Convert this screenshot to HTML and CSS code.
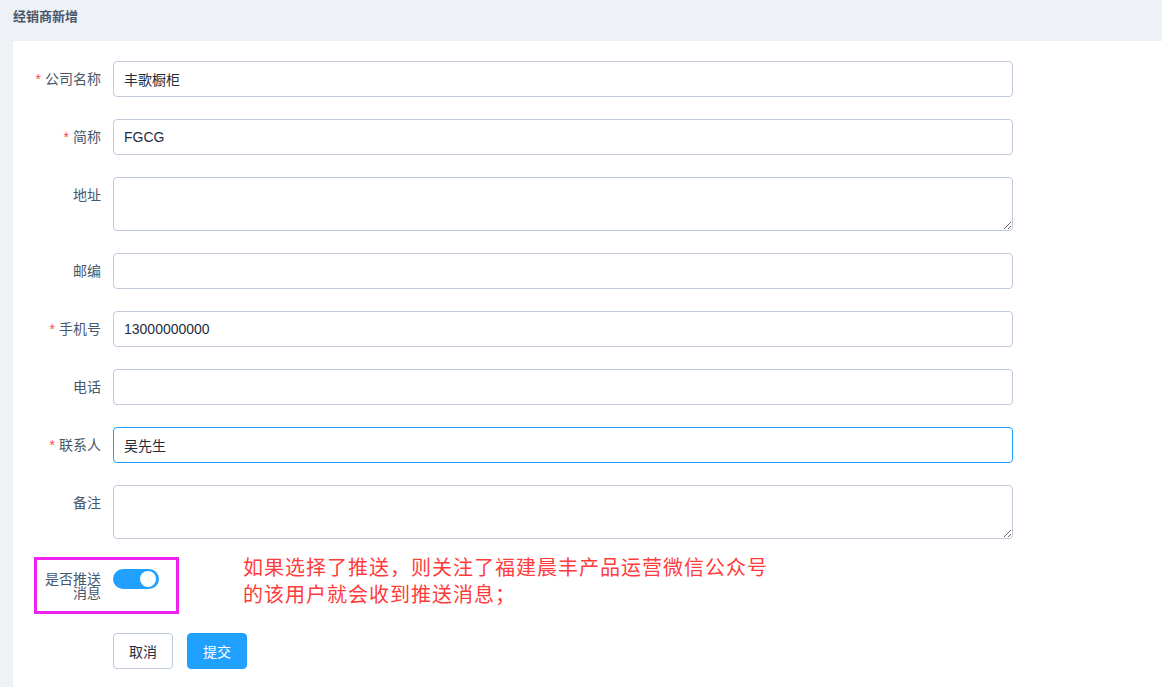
FILE: index.html
```html
<!DOCTYPE html>
<html lang="zh-CN">
<head>
<meta charset="utf-8">
<title>经销商新增</title>
<link rel="stylesheet" href="styles.css">
</head>
<body>
<div class="page">
  <div class="page-head">经销商新增</div>
  <div class="panel">
    <form class="form">
      <div class="item">
        <label class="label"><span class="req">*</span>公司名称</label>
        <div class="content"><input class="input" type="text" value="丰歌橱柜"></div>
      </div>
      <div class="item">
        <label class="label"><span class="req">*</span>简称</label>
        <div class="content"><input class="input" type="text" value="FGCG"></div>
      </div>
      <div class="item">
        <label class="label">地址</label>
        <div class="content"><textarea class="textarea" rows="2"></textarea></div>
      </div>
      <div class="item">
        <label class="label">邮编</label>
        <div class="content"><input class="input" type="text" value=""></div>
      </div>
      <div class="item">
        <label class="label"><span class="req">*</span>手机号</label>
        <div class="content"><input class="input" type="text" value="13000000000"></div>
      </div>
      <div class="item">
        <label class="label">电话</label>
        <div class="content"><input class="input" type="text" value=""></div>
      </div>
      <div class="item">
        <label class="label"><span class="req">*</span>联系人</label>
        <div class="content"><input class="input focused" type="text" value="吴先生"></div>
      </div>
      <div class="item">
        <label class="label">备注</label>
        <div class="content"><textarea class="textarea" rows="2"></textarea></div>
      </div>
      <div class="item switch-item">
        <label class="label"><span class="label-wrap">是否推送消息</span></label>
        <div class="content">
          <span class="switch"><span class="knob"></span></span>
        </div>
        <div class="highlight"></div>
        <div class="note">如果选择了推送，则关注了福建晨丰产品运营微信公众号<br>的该用户就会收到推送消息；</div>
      </div>
      <div class="item actions">
        <div class="label"></div>
        <div class="content buttons">
          <button type="button" class="btn">取消</button>
          <button type="button" class="btn primary">提交</button>
        </div>
      </div>
    </form>
  </div>
</div>
</body>
</html>
```

FILE: styles.css
```css
html, body {
  margin: 0;
  padding: 0;
  background: #eef1f6;
}
body {
  font-family: "Liberation Sans", "Noto Sans CJK SC", sans-serif;
  font-size: 14px;
  color: #1f2d3d;
}
.page {
  width: 1162px;
  height: 687px;
  overflow: hidden;
  padding-left: 13px;
  box-sizing: border-box;
  display: flex;
  flex-direction: column;
}
.page-head {
  flex: none;
  height: 41px;
  line-height: 34px;
  font-size: 13px;
  font-weight: bold;
  color: #48576a;
}
.panel {
  flex: 1 0 auto;
  background: #fff;
  padding-top: 20px;
}
.form {
  width: 1000px;
}
.item {
  display: flex;
  margin-bottom: 22px;
  position: relative;
}
.label {
  width: 100px;
  flex: none;
  box-sizing: border-box;
  padding: 11px 12px 11px 0;
  text-align: right;
  line-height: 14px;
  font-size: 14px;
  color: #48576a;
}
.req {
  color: #ff4949;
  margin-right: 4px;
}
.content {
  flex: 1;
  line-height: 36px;
}
.input {
  display: block;
  width: 900px;
  height: 36px;
  box-sizing: border-box;
  border: 1px solid #bfcbd9;
  border-radius: 4px;
  padding: 0 10px;
  font-family: "Liberation Sans", "Noto Sans CJK SC", sans-serif;
  font-size: 14px;
  color: #1f2d3d;
  background: #fff;
  outline: none;
}
.input.focused {
  border-color: #20a0ff;
}
.textarea {
  display: block;
  width: 900px;
  height: 54px;
  box-sizing: border-box;
  border: 1px solid #bfcbd9;
  border-radius: 4px;
  padding: 5px 7px;
  font-family: "Liberation Sans", "Noto Sans CJK SC", sans-serif;
  font-size: 14px;
  color: #1f2d3d;
  resize: vertical;
  outline: none;
  margin: 0;
}
.label-wrap {
  display: inline-block;
  width: 58px;
  text-align: right;
}
.switch-item .content {
  display: flex;
  align-items: flex-start;
  padding-top: 8px;
  line-height: 20px;
}
.switch {
  display: inline-block;
  position: relative;
  width: 46px;
  height: 20px;
  border-radius: 10px;
  background: #20a0ff;
}
.knob {
  position: absolute;
  top: 2px;
  right: 3px;
  width: 16px;
  height: 16px;
  border-radius: 50%;
  background: #fff;
}
.highlight {
  position: absolute;
  left: 21px;
  top: -4px;
  width: 145px;
  height: 57px;
  box-sizing: border-box;
  border: 3px solid #ef22ef;
}
.note {
  position: absolute;
  left: 230px;
  top: -8px;
  font-size: 20px;
  line-height: 27px;
  letter-spacing: 1px;
  color: #ff3b3b;
  white-space: nowrap;
  font-family: "Noto Sans CJK SC", sans-serif;
}
.buttons {
  display: flex;
  gap: 14px;
}
.actions .label {
  padding: 0;
}
.btn {
  width: 60px;
  height: 36px;
  box-sizing: border-box;
  border: 1px solid #bfcbd9;
  border-radius: 4px;
  background: #fff;
  color: #1f2d3d;
  font-family: "Liberation Sans", "Noto Sans CJK SC", sans-serif;
  font-size: 14px;
  padding: 0;
  cursor: pointer;
}
.btn.primary {
  background: #20a0ff;
  border-color: #20a0ff;
  color: #fff;
}
```
